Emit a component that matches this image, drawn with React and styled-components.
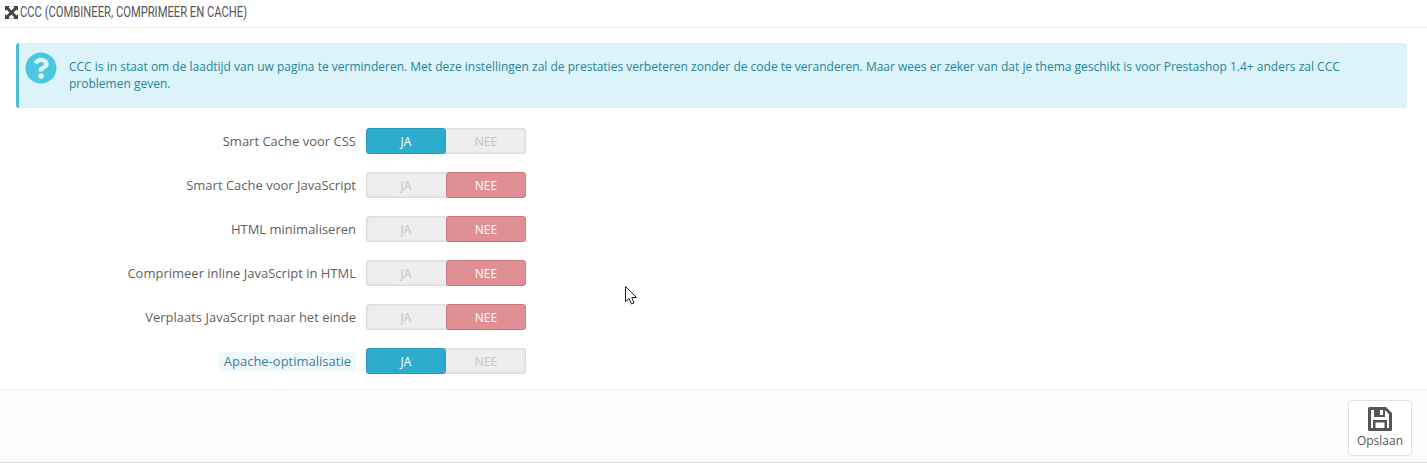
import React from 'react';
import styled, { createGlobalStyle } from 'styled-components';
import { FaQuestionCircle } from 'react-icons/fa';

const GlobalStyle = createGlobalStyle`
  html, body {
    margin: 0;
    padding: 0;
    background: #fff;
    font-family: "Open Sans", "Liberation Sans", sans-serif;
    font-size: 12px;
    color: #555;
  }
  * {
    box-sizing: border-box;
  }
`

const Panel = styled.div`
  position: relative;
  width: 1427px;
  height: 463px;
  border-bottom: 1px solid #d3d8db;
  overflow: hidden;
`

const Heading = styled.div`
  height: 28px;
  padding: 0 0 3px 5px;
  display: flex;
  align-items: center;
  gap: 2px;
  border-bottom: 1px solid #eee;
`

const HeadingText = styled.span`
  font-family: "Roboto", "Liberation Sans", sans-serif;
  font-size: 14px;
  color: #555;
  display: inline-block;
  transform: scaleX(0.8);
  transform-origin: left center;
  white-space: nowrap;
`

const Alert = styled.div`
  margin: 15px 20px 0 16px;
  height: 65px;
  padding: 15px 40px 0 6px;
  display: flex;
  gap: 12px;
  background: #dcf4f9;
  border-left: 3px solid #4bbdd4;
  border-radius: 3px;
  color: #268497;
  font-size: 12px;
  line-height: 17px;

  svg {
    flex: none;
    margin-top: -6px;
    color: #4ac7e0;
  }
`

const Form = styled.div`
  margin-top: 20px;
  display: flex;
  flex-direction: column;
  gap: 18px;
`

const Row = styled.div`
  height: 26px;
  display: flex;
  align-items: center;
`

const LabelCell = styled.div`
  width: 356px;
  display: flex;
  justify-content: flex-end;
  font-size: 13px;
  white-space: nowrap;
  color: #5f5f5f;
`

const Hint = styled.span`
  padding: 0 5px;
  line-height: 19px;
  border-radius: 3px;
  background: #eff8fc;
  color: #3d80a2;
`

const Toggle = styled.div`
  margin-left: 10px;
  width: 160px;
  height: 26px;
  display: flex;
  background: #eee;
  border-radius: 4px;
  box-shadow: inset 0 0 3px rgba(0, 0, 0, 0.22);
`

const Side = styled.div`
  width: 80px;
  display: flex;
  align-items: center;
  justify-content: center;
  font-size: 12px;
  border-radius: 3px;
  color: ${props => (props.$on ? '#fff' : '#c4c4c4')};
  background: ${props => (props.$on ? props.$color : 'transparent')};
  border: ${props => (props.$on ? `1px solid ${props.$edge}` : 'none')};
`

const Footer = styled.div`
  position: absolute;
  left: 0;
  right: 0;
  bottom: 0;
  height: 73px;
  padding: 10px 15px 0 0;
  display: flex;
  justify-content: flex-end;
  align-items: flex-start;
  background: #fcfdfe;
  border-top: 1px solid #eaedef;
`

const SaveButton = styled.button`
  width: 64px;
  height: 56px;
  padding: 0;
  display: flex;
  flex-direction: column;
  align-items: center;
  justify-content: center;
  gap: 1px;
  background: #fff;
  border: 1px solid #e0e3e5;
  border-radius: 3px;
  font-family: inherit;
  font-size: 12px;
  color: #555;
`

const Cursor = styled.svg`
  position: absolute;
  left: 625px;
  top: 286px;
`

const rows = [
  { label: 'Smart Cache voor CSS', on: true },
  { label: 'Smart Cache voor JavaScript', on: false },
  { label: 'HTML minimaliseren', on: false },
  { label: 'Comprimeer inline JavaScript in HTML', on: false },
  { label: 'Verplaats JavaScript naar het einde', on: false },
  { label: 'Apache-optimalisatie', on: true, hint: true },
];

function MoveIcon() {
  return (
    <svg width="13" height="13" viewBox="0 0 13 13" fill="#444">
      <path d="M0 0h5L3.6 1.5 6.5 4.4 9.4 1.5 8 0h5v5l-1.5-1.4-2.9 2.9 2.9 2.9L13 8v5H8l1.4-1.5-2.9-2.9-2.9 2.9L5 13H0V8l1.5 1.4 2.9-2.9-2.9-2.9L0 5z" />
    </svg>
  );
}

function SaveIcon() {
  return (
    <svg width="24" height="24" viewBox="0 0 24 24" fill="#555" fillRule="evenodd">
      <path d="M1.5 0H18L24 6V22.5A1.5 1.5 0 0 1 22.5 24H1.5A1.5 1.5 0 0 1 0 22.5V1.5A1.5 1.5 0 0 1 1.5 0ZM3 3V21H5V13H19V21H21V7.3L17 3V10H6V3ZM7.5 21H16.5V15.5H7.5ZM12 3V8H15V3Z" />
    </svg>
  );
}

export default function App() {
  return (
    <Panel>
      <GlobalStyle />

      {/* Heading */}
      <Heading>
        <MoveIcon />
        <HeadingText>CCC (COMBINEER, COMPRIMEER EN CACHE)</HeadingText>
      </Heading>

      {/* Alert */}
      <Alert>
        <FaQuestionCircle size={32} />
        <div>
          CCC is in staat om de laadtijd van uw pagina te verminderen. Met deze instellingen zal de prestaties verbeteren zonder de code te veranderen. Maar wees er zeker van dat je thema geschikt is voor Prestashop 1.4+ anders zal CCC problemen geven.
        </div>
      </Alert>

      {/* Switches */}
      <Form>
        {rows.map(row => (
          <Row key={row.label}>
            <LabelCell>
              {row.hint ? <Hint>{row.label}</Hint> : row.label}
            </LabelCell>
            <Toggle>
              <Side $on={row.on} $color="#2eacce" $edge="#2a9bba">JA</Side>
              <Side $on={!row.on} $color="#e08f95" $edge="#c97a80">NEE</Side>
            </Toggle>
          </Row>
        ))}
      </Form>

      {/* Footer */}
      <Footer>
        <SaveButton>
          <SaveIcon />
          Opslaan
        </SaveButton>
      </Footer>

      <Cursor width="13" height="20" viewBox="0 0 13 20">
        <path d="M0.5 0.5V15.5L4 12.5L6.5 18L9 17L6.8 11.5H11.5Z" fill="#fff" stroke="#222" strokeWidth="1" />
      </Cursor>
    </Panel>
  );
}
